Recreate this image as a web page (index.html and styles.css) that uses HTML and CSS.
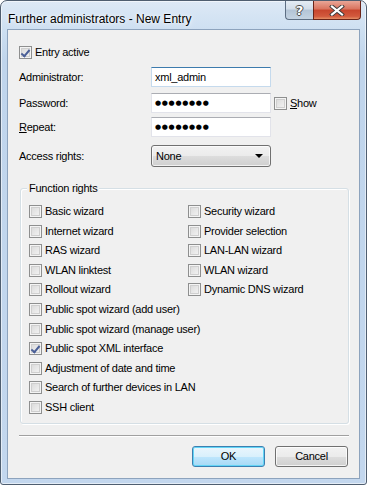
FILE: index.html
```html
<!DOCTYPE html>
<html>
<head>
<meta charset="utf-8">
<link rel="stylesheet" href="styles.css">
</head>
<body>
<div class="window">
  <div class="titlebar">
    <span class="title">Further administrators - New Entry</span>
    <div class="caption-buttons">
      <div class="cap-btn help"><span class="q">?</span></div>
      <div class="cap-btn close">
        <svg width="16" height="11" viewBox="0 0 16 11">
          <path d="M3 1.5 L13 9.5 M13 1.5 L3 9.5" stroke="#3a3a3a" stroke-width="4" stroke-linecap="square"/>
          <path d="M3 1.5 L13 9.5 M13 1.5 L3 9.5" stroke="#ffffff" stroke-width="2.2" stroke-linecap="square"/>
        </svg>
      </div>
    </div>
  </div>
  <div class="client">
    <label class="check-row entry">
      <span class="cb checked"></span><span>Entry active</span>
    </label>

    <div class="form-row admin">
      <span class="lbl">Administrator:</span>
      <div class="input focused">xml_admin</div>
    </div>
    <div class="form-row pw">
      <span class="lbl">Password:</span>
      <div class="input dots">●●●●●●●●</div>
      <label class="check-row show"><span class="cb"></span><span><u>S</u>how</span></label>
    </div>
    <div class="form-row rep">
      <span class="lbl"><u>R</u>epeat:</span>
      <div class="input dots">●●●●●●●●</div>
    </div>
    <div class="form-row access">
      <span class="lbl">Access rights:</span>
      <div class="select"><span>None</span><span class="arrow"></span></div>
    </div>

    <div class="group">
      <span class="legend">Function rights</span>
      <div class="grid">
        <label class="check-row"><span class="cb"></span><span>Basic wizard</span></label>
        <label class="check-row"><span class="cb"></span><span>Security wizard</span></label>
        <label class="check-row"><span class="cb"></span><span>Internet wizard</span></label>
        <label class="check-row"><span class="cb"></span><span>Provider selection</span></label>
        <label class="check-row"><span class="cb"></span><span>RAS wizard</span></label>
        <label class="check-row"><span class="cb"></span><span>LAN-LAN wizard</span></label>
        <label class="check-row"><span class="cb"></span><span>WLAN linktest</span></label>
        <label class="check-row"><span class="cb"></span><span>WLAN wizard</span></label>
        <label class="check-row"><span class="cb"></span><span>Rollout wizard</span></label>
        <label class="check-row"><span class="cb"></span><span>Dynamic DNS wizard</span></label>
        <label class="check-row wide"><span class="cb"></span><span>Public spot wizard (add user)</span></label>
        <label class="check-row wide"><span class="cb"></span><span>Public spot wizard (manage user)</span></label>
        <label class="check-row wide"><span class="cb checked"></span><span>Public spot XML interface</span></label>
        <label class="check-row wide"><span class="cb"></span><span>Adjustment of date and time</span></label>
        <label class="check-row wide"><span class="cb"></span><span>Search of further devices in LAN</span></label>
        <label class="check-row wide"><span class="cb"></span><span>SSH client</span></label>
      </div>
    </div>

    <div class="separator"></div>
    <div class="buttons">
      <div class="btn default">OK</div>
      <div class="btn">Cancel</div>
    </div>
  </div>
</div>
</body>
</html>
```

FILE: styles.css
```css
* { box-sizing: border-box; }
html, body {
  margin: 0;
  padding: 0;
  background: #ffffff;
}
body {
  font-family: "Liberation Sans", Arial, sans-serif;
  font-size: 11px;
  letter-spacing: -0.25px;
  color: #000;
}
.window {
  width: 367px;
  height: 485px;
  border: 1px solid #4f5e70;
  border-radius: 7px 7px 3px 3px;
  background: linear-gradient(180deg, #dde9f6 0px, #cddff1 30px, #c0d5ec 60px, #c3d7ee 100%);
  padding: 0 6px 5px 6px;
  display: flex;
  flex-direction: column;
  box-shadow: inset 0 0 0 1px rgba(255,255,255,0.55);
}
.titlebar {
  height: 28px;
  display: flex;
  justify-content: space-between;
  align-items: flex-start;
  flex: none;
}
.title {
  font-family: "Liberation Sans", Arial, sans-serif;
  font-size: 12px;
  letter-spacing: 0;
  margin-top: 11px;
  margin-left: 1px;
  line-height: 14px;
  color: #000;
  text-shadow: 0 0 6px rgba(255,255,255,0.9), 0 0 3px rgba(255,255,255,0.9);
}
.caption-buttons {
  display: flex;
  margin-right: -1px;
}
.cap-btn {
  height: 19px;
  border: 1px solid #5d6e83;
  border-top: none;
  display: flex;
  align-items: center;
  justify-content: center;
}
.help {
  width: 28px;
  border-radius: 0 0 0 4px;
  border-right: none;
  background: linear-gradient(180deg, #e4ecf4 0%, #d2dde9 45%, #b3c4d6 50%, #c4d3e2 100%);
}
.help .q {
  font-family: "DejaVu Sans", sans-serif;
  font-weight: bold;
  font-size: 13px;
  color: #fff;
  line-height: 13px;
  text-shadow: 1px 0 0 #4a4a4a, -1px 0 0 #4a4a4a, 0 1px 0 #4a4a4a, 0 -1px 0 #4a4a4a;
}
.close {
  width: 48px;
  border-radius: 0 0 4px 0;
  border-color: #6b2418;
  background: linear-gradient(180deg, #e9a697 0%, #d9735e 45%, #c8452d 50%, #d2593d 85%, #e58f66 100%);
}
.client {
  flex: none;
  width: 353px;
  height: 450px;
  border: 1px solid #8da3bd;
  background: #f0f0f0;
  padding: 0 11px;
  display: flex;
  flex-direction: column;
}
.check-row {
  display: flex;
  align-items: center;
  gap: 3px;
  height: 13px;
  line-height: 13px;
  white-space: nowrap;
}
.cb {
  width: 13px;
  height: 13px;
  flex: none;
  border: 1px solid #8e8f8f;
  position: relative;
  box-shadow: inset 0 0 0 1px #f4f4f4, inset 0 0 0 2px #cfcfcf;
  background: linear-gradient(135deg, #d6d6d6 0%, #eaeaea 60%, #f6f6f6 100%);
}
.cb.checked::after {
  content: "";
  position: absolute;
  left: 3px;
  top: 1px;
  width: 3px;
  height: 7px;
  border-right: 2px solid #4a5f97;
  border-bottom: 2px solid #4a5f97;
  transform: rotate(40deg);
  transform-origin: 50% 50%;
}
.entry {
  margin-top: 16px;
}
.form-row {
  display: flex;
  align-items: center;
  height: 20px;
}
.lbl {
  width: 132px;
  flex: none;
}
.admin { margin-top: 8px; }
.pw { margin-top: 6px; }
.rep { margin-top: 4px; }
.access { margin-top: 8px; height: 22px; }
.input {
  width: 120px;
  height: 20px;
  background: #fff;
  border: 1px solid #e2e3ea;
  border-top-color: #abadb3;
  padding: 0 3px;
  line-height: 18px;
}
.input.focused {
  border-color: #c5daed;
  border-top-color: #3d7bad;
}
.input.dots {
  font-family: "DejaVu Sans", sans-serif;
  font-size: 7px;
  letter-spacing: 0.7px;
  line-height: 18px;
}
.show {
  margin-left: 3px;
  gap: 3px;
}
.select {
  width: 120px;
  height: 22px;
  border: 1px solid #707070;
  border-radius: 3px;
  background: linear-gradient(180deg, #f2f2f2 0%, #ebebeb 50%, #dddddd 51%, #cfcfcf 100%);
  display: flex;
  align-items: center;
  justify-content: space-between;
  padding: 0 7px 0 4px;
  box-shadow: inset 0 0 0 1px rgba(255,255,255,0.7);
}
.arrow {
  width: 0;
  height: 0;
  border-left: 4px solid transparent;
  border-right: 4px solid transparent;
  border-top: 4px solid #000;
}
.group {
  margin-top: 21px;
  margin-left: 1px;
  width: 329px;
  height: 236px;
  border: 1px solid #d5dfe5;
  border-radius: 3px;
  box-shadow: inset 1px 1px 0 #fff, 1px 1px 0 #fff;
  padding: 0 0 0 8px;
}
.legend {
  display: inline-block;
  margin-top: -7px;
  margin-left: -2px;
  padding: 0 2px;
  background: #f0f0f0;
  line-height: 13px;
  height: 13px;
  vertical-align: top;
}
.grid {
  display: grid;
  grid-template-columns: 159px auto;
  grid-auto-rows: 19.6px;
  margin-top: 4px;
}
.grid .check-row {
  height: 19.6px;
  align-items: flex-start;
}
.grid .wide { grid-column: 1 / 3; }
.separator {
  margin-top: 11px;
  width: 330px;
  height: 2px;
  border-top: 1px solid #a0a0a0;
  border-bottom: 1px solid #ffffff;
}
.buttons {
  display: flex;
  justify-content: flex-end;
  gap: 10px;
  margin-top: 9px;
  width: 329px;
}
.btn {
  width: 73px;
  height: 21px;
  border: 1px solid #707070;
  border-radius: 3px;
  background: linear-gradient(180deg, #f2f2f2 0%, #ebebeb 50%, #dddddd 51%, #cfcfcf 100%);
  box-shadow: inset 0 0 0 1px rgba(255,255,255,0.75);
  display: flex;
  align-items: center;
  justify-content: center;
  line-height: 13px;
}
.btn.default {
  border-color: #3c7fb1;
  background: linear-gradient(180deg, #eaf6fd 0%, #d9f0fc 50%, #bee6fd 51%, #a7d9f5 100%);
  box-shadow: inset 0 0 0 1px #63d5f6;
}
u { text-decoration: underline; text-underline-offset: 1px; }
```
